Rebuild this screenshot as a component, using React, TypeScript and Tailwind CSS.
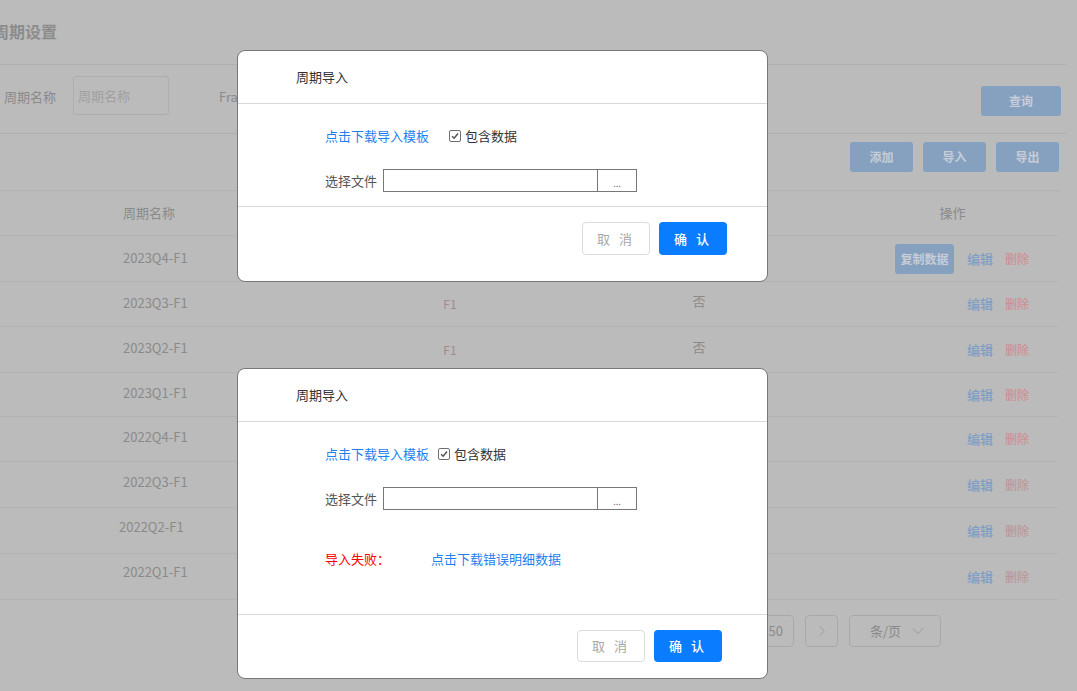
import { ChevronDown, ChevronRight } from 'lucide-react'

const rows = [
  { name: '2023Q4-F1', h: 'h-[46px]', nameCls: 'pb-[2px] pl-[123px]', copy: true, shown: false, del: 'text-[#cf8a8e]' },
  { name: '2023Q3-F1', h: 'h-[45px]', nameCls: 'pb-[3px] pl-[123px]', copy: false, shown: true, del: 'text-[#cf8a8e]' },
  { name: '2023Q2-F1', h: 'h-[46px]', nameCls: 'pb-[4px] pl-[123px]', copy: false, shown: true, del: 'text-[#cf8a8e]' },
  { name: '2023Q1-F1', h: 'h-[44px]', nameCls: 'pb-[4px] pl-[123px]', copy: false, shown: false, del: 'text-[#cf8a8e]' },
  { name: '2022Q4-F1', h: 'h-[45px]', nameCls: 'pb-[5px] pl-[123px]', copy: false, shown: false, del: 'text-[#cf8a8e]' },
  { name: '2022Q3-F1', h: 'h-[46px]', nameCls: 'pb-[6px] pl-[123px]', copy: false, shown: false, del: 'text-[#b99392]' },
  { name: '2022Q2-F1', h: 'h-[46px]', nameCls: 'pb-[8px] pl-[119px]', copy: false, shown: false, del: 'text-[#b99392]' },
  { name: '2022Q1-F1', h: 'h-[46px]', nameCls: 'pb-[10px] pl-[123px]', copy: false, shown: false, del: 'text-[#b99392]' },
]

function Checkbox() {
  return (
    <span className="flex h-[12px] w-[12px] items-center justify-center rounded-[2px] border border-[#6f6f6f] bg-white">
      <svg viewBox="0 0 12 12" className="h-[10px] w-[10px]">
        <path d="M2.5 6.2 L5 8.6 L9.6 3" fill="none" stroke="#555" strokeWidth="1.8" />
      </svg>
    </span>
  )
}

function ImportDialog({ top, error }: { top: string; error?: boolean }) {
  return (
    <div
      className={`absolute left-[237px] ${top} w-[531px] rounded-[8px] border border-[#777] bg-white font-['Noto_Sans_CJK_SC',sans-serif]`}
    >
      <div className="flex h-[53px] items-center border-b border-[#d9d9d9] pl-[58px] text-[13px] text-[#333]">
        周期导入
      </div>
      <div className="pl-[87px] pt-[22px] pb-[14px]">
        <div className="flex h-[20px] items-center text-[13px]">
          <span className="text-[#1f7fef]">点击下载导入模板</span>
          <span className={error ? 'ml-[9px]' : 'ml-[20px]'}>
            <Checkbox />
          </span>
          <span className="ml-[4px] text-[#333]">包含数据</span>
        </div>
        <div className="mt-[23px] flex items-center text-[13px]">
          <span className="text-[#555]">选择文件</span>
          <div className="ml-[6px] flex h-[23px] border border-[#777]">
            <div className="w-[213px]" />
            <div className="flex w-[39px] items-end justify-center border-l border-[#777] pb-[3px] text-[9px] leading-none text-[#5a6a9a]">
              ...
            </div>
          </div>
        </div>
        {error && (
          <div className="mt-[39px] mb-[31px] flex h-[20px] items-center text-[13px]">
            <span className="text-[#ff0000]">导入失败：</span>
            <span className="ml-[41px] text-[#1f7fef]">点击下载错误明细数据</span>
          </div>
        )}
      </div>
      <div
        className={`flex justify-end gap-[9px] border-t border-[#d9d9d9] pt-[15px] ${
          error ? 'pr-[45px] pb-[16px]' : 'pr-[40px] pb-[26px]'
        }`}
      >
        <button className={`w-[68px] ${error ? 'h-[32px]' : 'h-[33px]'} rounded-[4px] border border-[#dcdcdc] bg-white text-[13px] tracking-[3px] text-[#a8a8a8]`}>
          取 消
        </button>
        <button className={`w-[68px] ${error ? 'h-[32px]' : 'h-[33px]'} rounded-[4px] bg-[#0a7cff] text-[13px] font-medium tracking-[3px] text-white`}>
          确 认
        </button>
      </div>
    </div>
  )
}

export default function App() {
  return (
    <div className="relative h-[691px] w-[1077px] overflow-hidden bg-[#bbbbbb] font-['Noto_Sans_CJK_SC',sans-serif] text-[#8a8a8a]">
      {/* page under the mask */}
      <div className="w-[1066px]">
        <div className="flex h-[65px] items-center border-b border-[#afafaf] pb-[2px]">
          <h1 className="ml-[-7px] text-[16px] font-bold text-[#8c8c8c]">周期设置</h1>
        </div>
        <div className="flex h-[69px] items-start border-b border-[#afafaf]">
          <span className="ml-[4px] mt-[22px] text-[13px] leading-[20px]">周期名称</span>
          <div className="ml-[17px] mt-[11px] flex h-[39px] w-[96px] items-center rounded-[3px] border border-[#adadad] pl-[4px] text-[13px] text-[#a0a0a0]">
            周期名称
          </div>
          <span className="ml-[50px] mt-[22px] text-[13px] leading-[20px]">Framework</span>
          <button className="ml-auto mr-[5px] mt-[21px] h-[30px] w-[80px] rounded-[3px] bg-[#86a1bf] text-[12px] font-bold text-[#c6cdd7]">
            查询
          </button>
        </div>
        <div className="flex h-[57px] w-[1059px] items-start justify-end gap-[10px] border-b border-[#b2b2b2] pt-[8px]">
          <button className="h-[30px] w-[63px] rounded-[3px] bg-[#86a1bf] text-[12px] font-bold text-[#c6cdd7]">添加</button>
          <button className="h-[30px] w-[63px] rounded-[3px] bg-[#86a1bf] text-[12px] font-bold text-[#c6cdd7]">导入</button>
          <button className="h-[30px] w-[63px] rounded-[3px] bg-[#86a1bf] text-[12px] font-bold text-[#c6cdd7]">导出</button>
        </div>

        {/* table */}
        <div className="w-[1058px] text-[13px]">
          <div className="grid h-[45px] grid-cols-[308px_284px_214px_41px_211px] items-center border-b border-[#b3b3b3]">
            <span className="pl-[123px]">周期名称</span>
            <span />
            <span />
            <span />
            <span className="text-center">操作</span>
          </div>
          {rows.map((r) => (
            <div
              key={r.name}
              className={`grid ${r.h} grid-cols-[308px_284px_214px_41px_211px] border-b border-[#b3b3b3]`}
            >
              <span className={`flex items-center ${r.nameCls}`}>{r.name}</span>
              <span className="flex items-center justify-center text-[12px] text-[#a48a8d]">{r.shown ? 'F1' : ''}</span>
              <span className="flex items-center justify-center pb-[6px]">{r.shown ? '否' : ''}</span>
              <span />
              <span className="flex items-center justify-end gap-[12px] pr-[29px]">
                {r.copy && (
                  <button className="mr-[1px] h-[30px] w-[59px] rounded-[3px] bg-[#86a1bf] text-[12px] font-bold text-[#c6cdd7]">
                    复制数据
                  </button>
                )}
                <span className="font-medium text-[#7f9ec6]">编辑</span>
                <span className={`text-[12px] ${r.del}`}>删除</span>
              </span>
            </div>
          ))}
          <div className="flex items-start justify-end gap-[11px] pt-[15px] pr-[117px]">
            <div className="flex h-[32px] w-[50px] items-center justify-end rounded-[4px] border border-[#a9a9a9] pr-[10px] text-[13px]">
              50
            </div>
            <div className="flex h-[32px] w-[33px] items-center justify-center rounded-[4px] border border-[#a9a9a9]">
              <ChevronRight className="h-[18px] w-[18px] text-[#9a9a9a]" strokeWidth={1.2} />
            </div>
            <div className="flex h-[32px] w-[92px] items-center justify-between rounded-[4px] border border-[#a9a9a9] pl-[20px] pr-[12px] text-[13px]">
              条/页
              <ChevronDown className="h-[20px] w-[20px] text-[#9a9a9a]" strokeWidth={1.2} />
            </div>
          </div>
        </div>
      </div>

      <ImportDialog top="top-[50px]" />
      <ImportDialog top="top-[368px]" error />
    </div>
  )
}
